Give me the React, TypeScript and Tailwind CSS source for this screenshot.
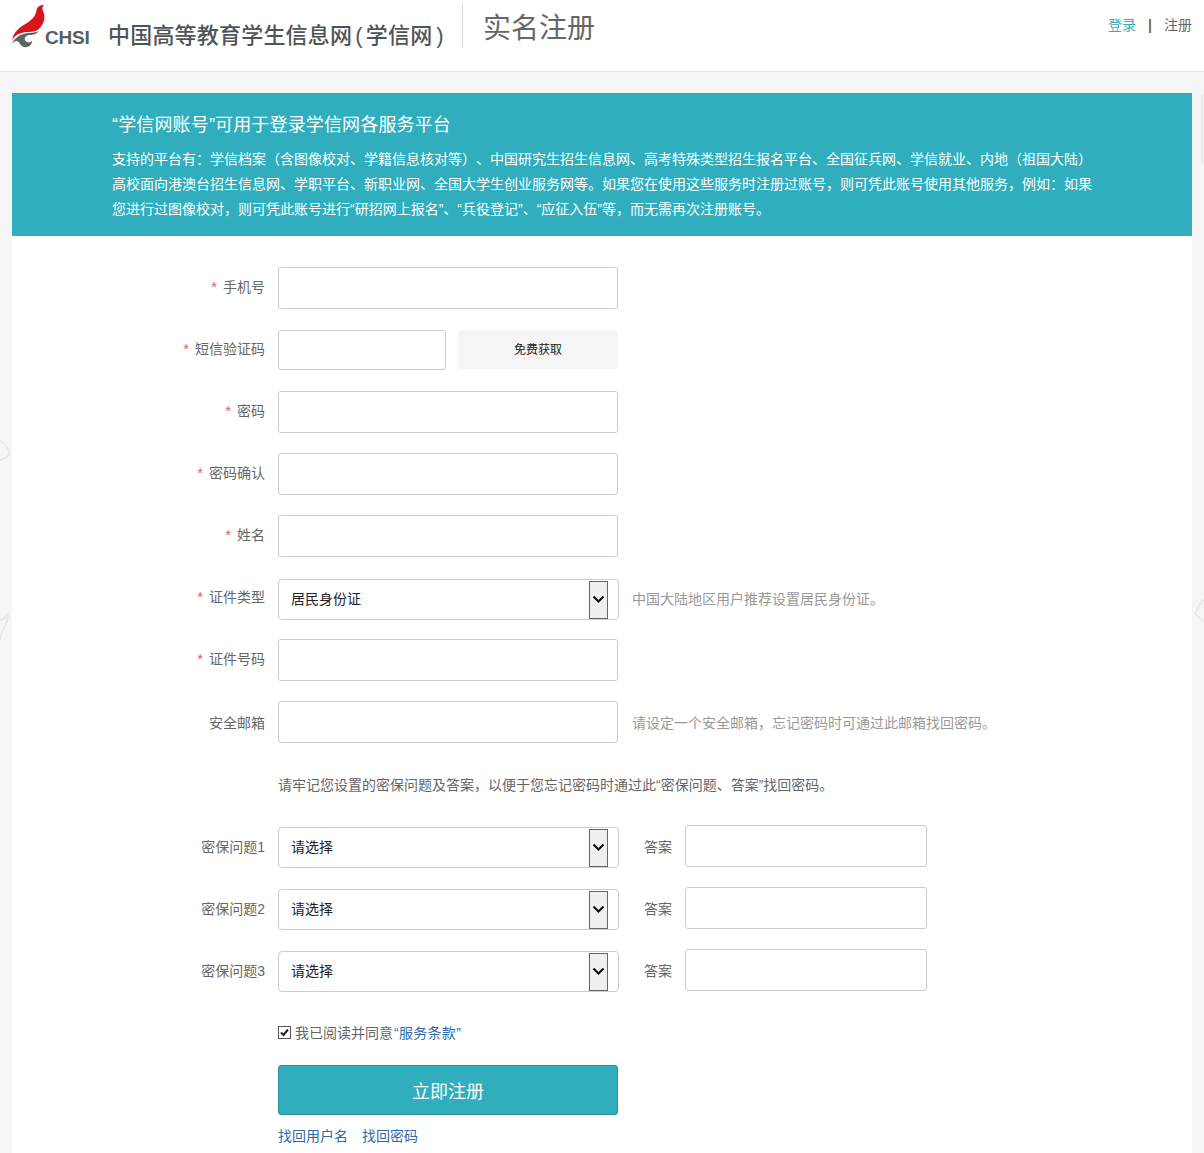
import React from "react";

const FONT = "font-['Liberation_Sans','Noto_Sans_CJK_SC',sans-serif] [text-spacing-trim:space-all]";

function Label({ text, required = true }: { text: string; required?: boolean }) {
  return (
    <label className={`w-[253px] shrink-0 text-right text-[14px] text-[#666] ${required ? "pb-[2px]" : "pt-[2px]"}`}>
      {required && <span className="mr-[6px] text-[15px] text-[#d9666a]">*</span>}
      {text}
    </label>
  );
}

function TextInput({ className = "w-[340px] h-[42px]" }: { className?: string }) {
  return <div className={`${className} rounded-[3px] border border-[#ccc] bg-white`} />;
}

function SelectBox({ value }: { value: string }) {
  return (
    <div className="flex h-[41px] w-[341px] items-center justify-between rounded-[4px] border border-[#ccc] bg-white pl-[12px] pr-[10px]">
      <span className="text-[14px] text-[#222]">{value}</span>
      <span className="flex h-[38px] w-[19px] items-center justify-center border border-[#666] bg-[#efefef]">
        <svg width="13" height="9" viewBox="0 0 13 9" fill="none" stroke="#111" strokeWidth="2.2">
          <path d="M1.5 1.5 6.5 6.5l5-5" />
        </svg>
      </span>
    </div>
  );
}

function Row({ label, required, children }: { label: string; required?: boolean; children: React.ReactNode }) {
  return (
    <div className="flex h-[62px] items-start">
      <div className="flex h-[42px] items-center">
        <Label text={label} required={required} />
      </div>
      <div className="ml-[13px] flex items-center">{children}</div>
    </div>
  );
}

function Hint({ text, className = "ml-[14px]" }: { text: string; className?: string }) {
  return <span className={`${className} pt-[2px] text-[14px] text-[#999]`}>{text}</span>;
}

function QuestionRow({ label }: { label: string }) {
  return (
    <Row label={label} required={false}>
      <div className="mt-[2px]">
        <SelectBox value="请选择" />
      </div>
      <span className="ml-[25px] w-[41px] pt-[2px] text-[14px] text-[#666]">答案</span>
      <TextInput className="-mt-px h-[42px] w-[242px]" />
    </Row>
  );
}

function Logo() {
  return (
    <div className="relative h-[50px] w-[84px] shrink-0">
      <svg width="40" height="50" viewBox="12 0 40 50" className="absolute left-0 top-0">
        <path
          d="M44 5C40 5 37 7 36.5 10 36 15 33 19 27 23 20 27 14 31 12 40 16 34 22 32 28 32 33 32 37 31 39 29 44 24 46 17 43 11 42 9 42 7 44 5Z"
          fill="#d8141f"
        />
        <path
          d="M12 44C14 38 20 34 28 33 32 32.5 36 32.5 39 31 36 35 32 35 29 35 26 35.5 24 38 25 40 26 43 30 43 32 41 32 45 28 48 24 47 20 46 20 42 17 41 15 41 13 42 12 44Z"
          fill="#5a6465"
        />
      </svg>
      <span className="absolute left-[33px] top-[26px] text-[19px] font-bold leading-[24px] tracking-[-0.2px] text-[#555f60]">
        CHSI
      </span>
    </div>
  );
}

// faint watermark doodles showing at the page edges
function EdgeDoodles() {
  return (
    <svg aria-hidden="true" width="1204" height="1153" className="pointer-events-none absolute left-0 top-0" fill="none" stroke="#e6e6e6" strokeWidth="1.5">
      <path d="M0 441c4 1 8 7 10 13-3 4-7 5-10 6" />
      <path d="M0 620c3 0 6-3 8-6 1 4-1 8-3 12-2 3-4 6-5 14" />
      <path d="M1204 600c-4 2-6 8-9 14 3 2 6 6 9 8" />
      <path d="M1204 95c-1 0-2 1-2 2v66" />
    </svg>
  );
}

export default function App() {
  return (
    <div className={`${FONT} relative h-[1153px] overflow-hidden bg-[#f5f5f5]`}>
      <EdgeDoodles />
      <header className="flex h-[72px] items-start border-b border-[#e8e8e8] bg-white px-[12px]">
        <Logo />
        <div className="ml-[12px] mt-[19px] w-[354px] shrink-0 whitespace-nowrap text-[22px] font-medium leading-[34px] tracking-[0.2px] text-[#4f5556]">
          中国高等教育学生信息网<span className="mx-[3px]">(</span>学信网<span className="ml-[4px]">)</span>
        </div>
        <div className="mt-[4px] h-[44px] w-px bg-[#ddd]" />
        <h1 className="ml-[20px] mt-[8px] text-[28px] leading-[42px] text-[#666]">实名注册</h1>
        <div className="ml-auto mt-[15px] flex items-center text-[14px] leading-[20px]">
          <a className="text-[#30aebd]">登录</a>
          <span className="mx-[12px] font-bold text-[#666]">|</span>
          <a className="text-[#666]">注册</a>
        </div>
      </header>

      <main className="relative mx-[12px] mt-[21px] min-h-[1060px] bg-white">
        <section className="h-[143px] bg-[#30aebd] pl-[100px] pr-[96px] pt-[18px] text-white">
          <h2 className="text-[18px] leading-[28px] tracking-[0.15px]">“学信网账号”可用于登录学信网各服务平台</h2>
          <p className="mt-[8px] text-[14px] leading-[25px]">
            支持的平台有：学信档案（含图像校对、学籍信息核对等）、中国研究生招生信息网、高考特殊类型招生报名平台、全国征兵网、学信就业、内地（祖国大陆）高校面向港澳台招生信息网、学职平台、新职业网、全国大学生创业服务网等。如果您在使用这些服务时注册过账号，则可凭此账号使用其他服务，例如：如果您进行过图像校对，则可凭此账号进行“研招网上报名”、“兵役登记”、“应征入伍”等，而无需再次注册账号。
          </p>
        </section>

        <form className="pt-[31px]">
          <Row label="手机号">
            <TextInput />
          </Row>
          <Row label="短信验证码">
            <TextInput className="mt-px h-[40px] w-[168px]" />
            <button
              type="button"
              className="ml-[12px] h-[39px] w-[160px] rounded-[3px] bg-[#f5f5f5] text-[12px] text-[#222]"
            >
              免费获取
            </button>
          </Row>
          <Row label="密码">
            <TextInput />
          </Row>
          <Row label="密码确认">
            <TextInput />
          </Row>
          <Row label="姓名">
            <TextInput />
          </Row>
          <Row label="证件类型">
            <div className="mt-[2px]">
              <SelectBox value="居民身份证" />
            </div>
            <Hint className="ml-[13px]" text="中国大陆地区用户推荐设置居民身份证。" />
          </Row>
          <Row label="证件号码">
            <TextInput />
          </Row>
          <Row label="安全邮箱" required={false}>
            <TextInput />
            <Hint text="请设定一个安全邮箱，忘记密码时可通过此邮箱找回密码。" />
          </Row>
          <div className="flex h-[62px] items-start pl-[266px]">
            <p className="pt-px text-[14px] leading-[42px] text-[#666]">
              请牢记您设置的密保问题及答案，以便于您忘记密码时通过此“密保问题、答案”找回密码。
            </p>
          </div>
          <QuestionRow label="密保问题1" />
          <QuestionRow label="密保问题2" />
          <QuestionRow label="密保问题3" />

          <div className="pl-[266px]">
            <label className="flex h-[43px] items-center text-[14px] text-[#666]">
              <span className="mr-[4px] flex h-[13px] w-[13px] items-center justify-center border border-[#555] bg-white">
                <svg width="11" height="11" viewBox="0 0 11 11" fill="none" stroke="#222" strokeWidth="2">
                  <path d="M2 5.5 4.5 8 9 2.5" />
                </svg>
              </span>
              <span className="pt-[2px]">
                我已阅读并同意<a className="pl-px tracking-[0.3px] text-[#2c6aa8]">“服务条款”</a>
              </span>
            </label>
            <button
              type="button"
              className="mt-[11px] h-[50px] w-[340px] rounded-[3px] border border-[#2a8f9b] bg-[#30aebd] pt-[4px] text-[18px] text-white"
            >
              立即注册
            </button>
            <div className="mt-[10px] flex gap-[14px] text-[14px] leading-[22px] text-[#2c6aa8]">
              <a>找回用户名</a>
              <a>找回密码</a>
            </div>
          </div>
        </form>
      </main>
    </div>
  );
}
